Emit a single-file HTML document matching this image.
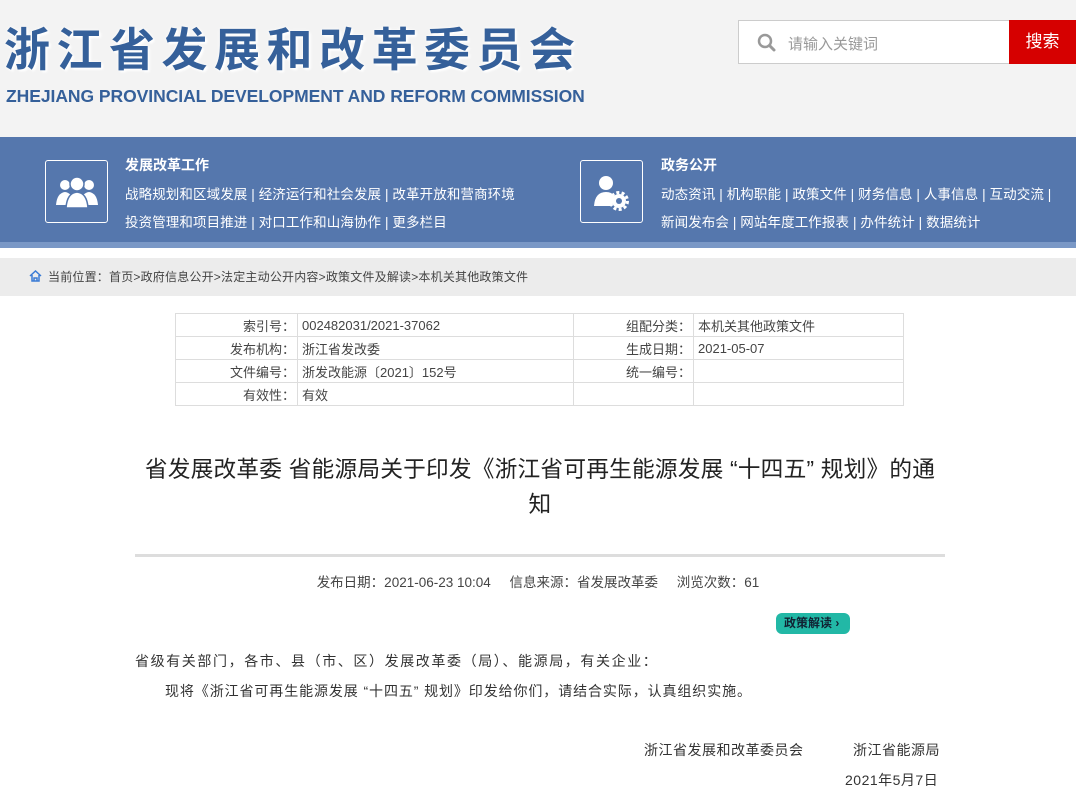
<!DOCTYPE html>
<html><head><meta charset="utf-8"><style>
*{margin:0;padding:0;box-sizing:border-box}
body{width:1076px;height:792px;overflow:hidden;background:#fff;font-family:"Liberation Sans","Noto Sans CJK SC",sans-serif;color:#333;position:relative}
.a{position:absolute}
.hdr{left:0;top:0;width:1076px;height:137px;background:#f3f3f3}
.t1{left:4px;top:14px;font-size:46px;font-weight:bold;color:#35609a;letter-spacing:6.5px;text-shadow:2px 2px 2px #fff,0 0 3px #fff;white-space:nowrap}
.t2{left:6px;top:86px;font-size:17.5px;font-weight:bold;color:#35609a;white-space:nowrap;letter-spacing:-0.05px}
.sb{left:738px;top:20px;width:272px;height:44px;background:#fff;border:1px solid #ccc}
.sbtn{left:1009px;top:20px;width:67px;height:44px;background:#d60000;color:#fff;font-size:17px;line-height:44px;text-align:center}
.band{left:0;top:137px;width:1076px;height:111px;background:#5577ad;border-bottom:6px solid #7a98c6}
.ib{width:63px;height:63px;border:1px solid #fff;border-radius:3px}
.bt{color:#fff;font-size:14px;font-weight:bold}
.bl{color:#fff;font-size:13.5px;white-space:nowrap;letter-spacing:0.1px}
.crumb{left:0;top:258px;width:1076px;height:38px;background:#ececec;font-size:12px;color:#444;line-height:38px;padding-left:48px;letter-spacing:0.2px}
table{position:absolute;left:175px;top:313px;border-collapse:collapse;font-size:13px;color:#444}
td{border:1px solid #ddd;height:23px;padding:0 4px}
td.l{text-align:right;padding-right:2px}
.title{left:120px;width:840px;top:452px;text-align:center;font-size:22.7px;line-height:35px;color:#222;letter-spacing:0.2px}
.meta{left:0;width:1076px;top:571px;text-align:center;font-size:13.5px;color:#444;letter-spacing:0px}
.p{font-size:14px;color:#333;white-space:nowrap}
</style></head><body>
<div class="a hdr"></div>
<div class="a t1">浙江省发展和改革委员会</div>
<div class="a t2">ZHEJIANG PROVINCIAL DEVELOPMENT AND REFORM COMMISSION</div>
<div class="a sb"></div>
<svg class="a" style="left:757px;top:33px" width="20" height="20" viewBox="0 0 20 20"><circle cx="8" cy="8" r="6" fill="none" stroke="#999" stroke-width="2.5"/><path d="M12.5 12.5 L17 17" stroke="#999" stroke-width="3" stroke-linecap="round"/></svg>
<div class="a" style="left:788px;top:33px;font-size:15px;color:#999">请输入关键词</div>
<div class="a sbtn">搜索</div>
<div class="a band"></div>
<div class="a ib" style="left:45px;top:160px"></div>
<svg class="a" style="left:53px;top:175px" width="48" height="35" viewBox="0 0 48 35"><g fill="#fff"><circle cx="12" cy="10" r="5"/><circle cx="36" cy="10" r="5"/><path d="M3 30 Q4 18 12 17 Q20 18 21 30Z"/><path d="M27 30 Q28 18 36 17 Q44 18 45 30Z"/><circle cx="24" cy="9" r="7" stroke="#5577ad" stroke-width="1.5"/><path d="M13 33 Q14 18 24 17 Q34 18 35 33Z" stroke="#5577ad" stroke-width="1.5"/></g></svg>
<div class="a bt" style="left:125px;top:155px">发展改革工作</div>
<div class="a bl" style="left:125px;top:183px">战略规划和区域发展 | 经济运行和社会发展 | 改革开放和营商环境</div>
<div class="a bl" style="left:125px;top:211px">投资管理和项目推进 | 对口工作和山海协作 | 更多栏目</div>
<div class="a ib" style="left:580px;top:160px"></div>
<svg class="a" style="left:592px;top:174px" width="40" height="38" viewBox="0 0 40 38"><g fill="#fff"><circle cx="14" cy="9" r="7"/><path d="M2 32 Q3 18 14 18 Q20 18 22 22 L20 32Z"/><circle cx="27" cy="27" r="7"/></g><circle cx="27" cy="27" r="8.5" fill="none" stroke="#fff" stroke-width="3" stroke-dasharray="3 2.3"/><circle cx="27" cy="27" r="3" fill="#5577ad"/></svg>
<div class="a bt" style="left:661px;top:155px">政务公开</div>
<div class="a bl" style="left:661px;top:183px">动态资讯 | 机构职能 | 政策文件 | 财务信息 | 人事信息 | 互动交流 |</div>
<div class="a bl" style="left:661px;top:211px">新闻发布会 | 网站年度工作报表 | 办件统计 | 数据统计</div>
<div class="a crumb">当前位置：首页&gt;政府信息公开&gt;法定主动公开内容&gt;政策文件及解读&gt;本机关其他政策文件</div>
<svg class="a" style="left:29px;top:270px" width="13" height="12" viewBox="0 0 13 12"><path d="M1 6 L6.5 1 L12 6 M3 5 V11 H10 V5 M5 11 V8 H8 V11" fill="none" stroke="#3a7bd5" stroke-width="1.5"/></svg>
<table>
<tr><td class="l" style="width:122px">索引号：</td><td style="width:276px">002482031/2021-37062</td><td class="l" style="width:120px">组配分类：</td><td style="width:210px">本机关其他政策文件</td></tr>
<tr><td class="l">发布机构：</td><td>浙江省发改委</td><td class="l">生成日期：</td><td>2021-05-07</td></tr>
<tr><td class="l">文件编号：</td><td>浙发改能源〔2021〕152号</td><td class="l">统一编号：</td><td></td></tr>
<tr><td class="l">有效性：</td><td>有效</td><td></td><td></td></tr>
</table>
<div class="a title">省发展改革委 省能源局关于印发《浙江省可再生能源发展 “十四五” 规划》的通<br>知</div>
<div class="a" style="left:135px;top:554px;width:810px;height:3px;background:#ddd"></div>
<div class="a meta">发布日期：2021-06-23 10:04 &nbsp;&nbsp;&nbsp; 信息来源：省发展改革委 &nbsp;&nbsp;&nbsp; 浏览次数：61</div>
<div class="a" style="left:776px;top:613px;width:74px;height:21px;background:#22b8a6;border-radius:6px;font-size:12px;color:#123;line-height:21px;padding-left:8px;font-weight:bold">政策解读 ›</div>
<div class="a p" style="left:135px;top:651px;letter-spacing:1.6px">省级有关部门，各市、县（市、区）发展改革委（局）、能源局，有关企业：</div>
<div class="a p" style="left:165px;top:681px;letter-spacing:0.9px">现将《浙江省可再生能源发展 “十四五” 规划》印发给你们，请结合实际，认真组织实施。</div>
<div class="a p" style="left:644px;top:740px;letter-spacing:0.5px">浙江省发展和改革委员会</div>
<div class="a p" style="left:853px;top:740px;letter-spacing:0.5px">浙江省能源局</div>
<div class="a p" style="left:845px;top:770px;letter-spacing:0.5px">2021年5月7日</div>
</body></html>
